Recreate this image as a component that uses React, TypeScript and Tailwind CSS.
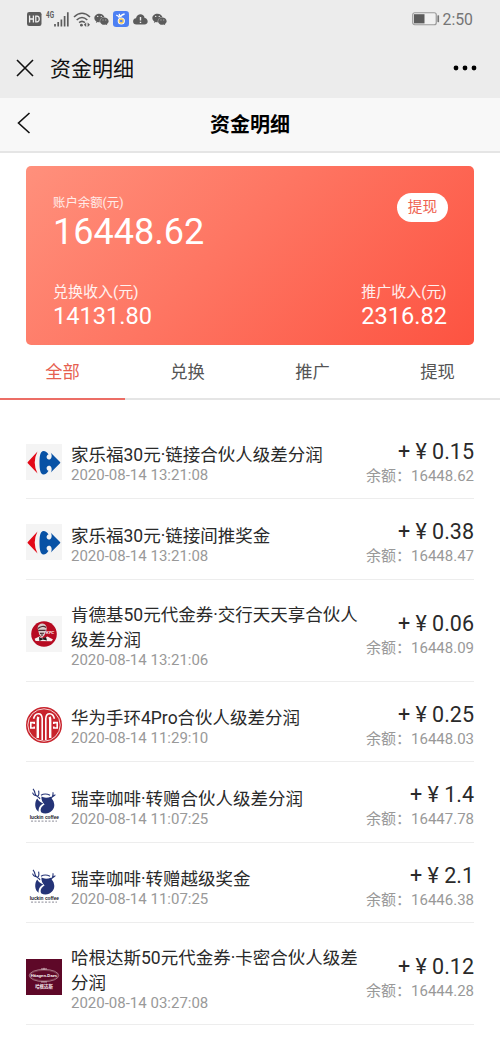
import React from 'react';
import { FaWeixin } from 'react-icons/fa';

type Logo = 'carrefour' | 'kfc' | 'citic' | 'luckin' | 'haagen';

interface Entry {
  logo: Logo;
  title: string[];
  time: string;
  amount: string;
  balance: string;
}

const entries: Entry[] = [
  { logo: 'carrefour', title: ['家乐福30元·链接合伙人级差分润'], time: '2020-08-14 13:21:08', amount: '0.15', balance: '16448.62' },
  { logo: 'carrefour', title: ['家乐福30元·链接间推奖金'], time: '2020-08-14 13:21:08', amount: '0.38', balance: '16448.47' },
  { logo: 'kfc', title: ['肯德基50元代金券·交行天天享合伙人', '级差分润'], time: '2020-08-14 13:21:06', amount: '0.06', balance: '16448.09' },
  { logo: 'citic', title: ['华为手环4Pro合伙人级差分润'], time: '2020-08-14 11:29:10', amount: '0.25', balance: '16448.03' },
  { logo: 'luckin', title: ['瑞幸咖啡·转赠合伙人级差分润'], time: '2020-08-14 11:07:25', amount: '1.4', balance: '16447.78' },
  { logo: 'luckin', title: ['瑞幸咖啡·转赠越级奖金'], time: '2020-08-14 11:07:25', amount: '2.1', balance: '16446.38' },
  { logo: 'haagen', title: ['哈根达斯50元代金券·卡密合伙人级差', '分润'], time: '2020-08-14 03:27:08', amount: '0.12', balance: '16444.28' },
];

function BrandLogo({ name }: { name: Logo }) {
  const cls = 'block h-9 w-9 shrink-0 overflow-visible';
  if (name === 'carrefour')
    return (
      <svg className={cls} viewBox="0 0 36 36">
        <rect width="36" height="36" fill="#f4f4f4" />
        <path d="M11.5 7.5 L1.8 18 Q1.2 18.7 1.8 19.3 L11.5 29.5 Q8.7 24 8.7 18.5 Q8.7 13 11.5 7.5Z" fill="#e30a18" />
        <path d="M22.5 10.5 C21.3 8.2 19.5 7 17.5 7 C14.3 7 13.5 12 13.5 18.5 C13.5 25 14.3 30.6 17.5 30.6 C19.5 30.6 21.3 29 22.5 26.8 C21.3 26.6 20.6 25.4 20.6 24.1 C20.6 22.2 22.2 21.2 23.8 21.8 C26 22.8 26.2 26.3 24.8 28.6 L34 19.3 Q34.7 18.6 34 17.9 L24.8 8.7 C26.2 11 26 14.4 23.8 15.4 C22.2 16 20.6 15 20.6 13.1 C20.6 11.8 21.3 10.7 22.5 10.5Z" fill="#0852a5" />
      </svg>
    );
  if (name === 'kfc')
    return (
      <svg className={cls} viewBox="0 0 36 36">
        <rect width="36" height="36" fill="#f5f5f5" />
        <circle cx="18" cy="18" r="12.8" fill="#b70b22" />
        <path d="M8.6 22.8 L13.8 20.2 L17 22.5 L21.5 20.6 L27 23.4 L25.5 25.2 L9.6 24.9Z" fill="#f7eeee" />
        <path d="M11.6 12 C11.8 6.8 18.8 5.7 20.4 10.5 C21.4 13.5 19.5 16.5 18.6 19 L16.2 21.8 L13.2 18.6Z" fill="#d9cccc" />
        <path d="M12 12.5 C14 10.5 18 9.5 20 11.5 M12.2 14.4 H19.6 M14 17.4 L18 17.2 M16 17.8 V20" stroke="#4c2c31" strokeWidth="1.1" fill="none" />
        <path d="M13 21 L16.4 22.4 L20 21 L21 24.6 L16.8 23.5 L13.4 25Z" fill="#20181b" />
        <text x="20" y="18.2" fontSize="4" fontWeight="700" fontStyle="italic" fill="#fff" fontFamily="Liberation Sans, sans-serif">KFC</text>
      </svg>
    );
  if (name === 'citic')
    return (
      <svg className={cls} viewBox="0 0 36 36">
        <circle cx="18" cy="18" r="18" fill="#c8232c" />
        <circle cx="18" cy="18" r="16.2" fill="none" stroke="#fff" strokeWidth=".8" />
        <g fill="none" stroke="#fff" strokeWidth="1.6">
          <path d="M8.2 17 V15.6 H4.8 V21 H8.2 V19.6" />
          <path d="M27.8 17 V15.6 H31.2 V21 H27.8 V19.6" />
          <path d="M7.6 11.8 C9 5.6 15.6 4.8 16.2 11.5 V33" />
          <path d="M28.4 11.8 C27 5.6 20.4 4.8 19.8 11.5 V33" />
        </g>
        <path d="M11.8 31 V13.5 C11.8 10.8 12.4 9.8 12.4 9.8" fill="none" stroke="#fff" strokeWidth="2.4" />
        <path d="M24.2 31 V13.5 C24.2 10.8 23.6 9.8 23.6 9.8" fill="none" stroke="#fff" strokeWidth="2.4" />
      </svg>
    );
  if (name === 'luckin')
    return (
      <svg className={cls} viewBox="0 0 36 36">
        <path d="M11.2 11.6 C8.2 15.5 8.6 22.3 12.6 24.8 C12.4 20.4 14.4 17.8 17.4 16.6 C15 15.8 13 14.5 11.2 11.6Z" fill="#253477" />
        <path d="M15.4 9.6 C18 11 21.5 11 24.8 9.8 C25.3 12 28 13.4 28 16.2 C29.2 20 26.8 24 23 25.8 C20.6 26.8 17.4 26.6 15.4 25.6 C13.6 22.6 15.2 19.6 18.6 17.6 C16.4 15.6 15.2 12.8 15.4 9.6Z" fill="#253477" />
        <path d="M14 12 C12.8 9 9.9 9.8 9.2 6.8 C8.9 5 8.3 3.2 7 1.8 M9.6 8.6 C8 8.2 7 7.2 6.5 5.6 M11.5 9.4 C13.5 8.2 13 5.6 12.6 3.6 M24 11.7 C26.6 10.6 27.4 8.6 27 5.2 M27 9.5 L29.4 7.6 M15 8.2 C17.5 6.8 21 6.8 24 8.2" fill="none" stroke="#253477" strokeWidth="1.1" />
        <text x="3.7" y="31.6" fontSize="4.8" fontWeight="700" fill="#20202a" fontFamily="Liberation Sans, sans-serif">luckin coffee</text>
        <path d="M5 34.1 H31" stroke="#8b8b98" strokeWidth="1" strokeDasharray="2 1.5" />
      </svg>
    );
  return (
    <svg className={cls} viewBox="0 0 36 36">
      <rect width="36" height="36" fill="#5e0828" />
      <ellipse cx="18" cy="16.5" rx="14.7" ry="6.1" fill="none" stroke="#dac1c6" strokeWidth=".6" />
      <ellipse cx="18" cy="16.5" rx="13.6" ry="5.1" fill="none" stroke="#a87884" strokeWidth=".4" />
      <path d="M15 9.9 H21 M18 8.8 V11 M15 23 H21" stroke="#d8bfc5" strokeWidth=".8" />
      <text x="18" y="18" textAnchor="middle" fontSize="4.2" fontWeight="700" fill="#fff" fontFamily="Liberation Sans, sans-serif">Häagen-Dazs</text>
      <text x="18" y="29" textAnchor="middle" fontSize="4.4" fontWeight="700" fill="#f5e8ec" fontFamily="Noto Sans CJK SC, sans-serif">哈根达斯</text>
    </svg>
  );
}

function StatusBar() {
  return (
    <div className="flex h-[38px] items-center bg-[#ececec] pr-[27px] pl-[27px] text-[#5c5c5c]">
      <svg className="h-[14px] w-[15px]" viewBox="0 0 15 14">
        <rect width="14.5" height="14" rx="2.2" fill="#5c5c5c" />
        <path d="M2.6 3.5 V10.5 M6.4 3.5 V10.5 M2.6 7 H6.4 M8.8 4.1 H10 C13 4.1 13 9.9 10 9.9 H8.8 Z" fill="none" stroke="#efefef" strokeWidth="1.3" />
      </svg>
      <svg className="ml-1 h-[17px] w-6 overflow-visible" viewBox="0 0 24 17">
        <text x="0" y="7.2" fontSize="8.5" fontWeight="700" fill="#5c5c5c" fontFamily="Roboto, sans-serif" textLength="8" lengthAdjust="spacingAndGlyphs">4G</text>
        <path d="M9 13 V15.5 M12.2 11 V15.5 M15.4 8.5 V15.5 M18.6 5 V15.5 M21.8 1.2 V15.5" stroke="#5c5c5c" strokeWidth="1.7" />
      </svg>
      <svg className="ml-[3px] h-[15px] w-[18px]" viewBox="0 0 18 15">
        <path d="M1 5 Q9 -2.5 17 5 M3.7 8 Q9 3 14.3 8 M6.1 10.6 Q9 8 11.9 10.6" fill="none" stroke="#5c5c5c" strokeWidth="1.6" />
        <circle cx="8.4" cy="13.2" r="1.4" fill="#5c5c5c" />
        <path d="M13.2 10.5 V15 L10.8 12.8Z M14.6 10.5 V15 L17 12.8Z" fill="#5c5c5c" />
      </svg>
      <FaWeixin className="ml-[3px] h-[15px] w-[15px]" />
      <svg className="ml-[4px] h-4 w-4" viewBox="0 0 16 16">
        <rect width="16" height="16" rx="3.2" fill="#4d80f3" />
        <circle cx="8.3" cy="10" r="2.7" fill="none" stroke="#fff" strokeWidth="1.8" />
        <circle cx="8.3" cy="10" r="2" fill="none" stroke="#f5c957" strokeWidth="1.3" />
        <path d="M3.2 4.4 Q5.3 4.1 6.4 6.8 M6.2 2.8 L7 5.7 M11.6 3 Q8.1 3.6 7.4 6.1" fill="none" stroke="#fff" strokeWidth="1.3" />
      </svg>
      <svg className="ml-1 h-[11px] w-[15px]" viewBox="0 0 15 11">
        <path d="M3.5 10.5 C-1 10.5 -.9 4.6 3 4.3 C4 -.9 11 -.9 11.6 4.1 C15.6 4.4 15.8 10.5 11.5 10.5Z" fill="#5c5c5c" />
        <path d="M7.5 3 V6.5 M7.5 7.7 V9.1" stroke="#eee" strokeWidth="1.4" />
      </svg>
      <FaWeixin className="ml-[4px] h-[15px] w-[15px]" />
      <svg className="ml-auto h-[14px] w-[28px]" viewBox="0 0 28 14">
        <rect x=".75" y=".75" width="23.5" height="12" rx="2" fill="#f1f1f1" stroke="#999" strokeWidth="1.2" />
        <rect x="2" y="2.2" width="10.5" height="9.2" fill="#5c5c5c" />
        <rect x="25.4" y="3.2" width="1.7" height="7" rx=".6" fill="#777" />
      </svg>
      <span className="ml-[3px] pt-[2px] text-[15.8px] leading-none text-[#757575]">2:50</span>
    </div>
  );
}

export default function App() {
  return (
    <main className="h-[1039px] w-[500px] overflow-hidden bg-white font-['Roboto','Noto_Sans_CJK_SC',sans-serif] text-[#2a2a2a]">
      <StatusBar />
      <header className="flex h-[60px] items-center bg-[#ececec] pr-[23px] pl-4">
        <svg className="h-[18px] w-[18px]" viewBox="0 0 18 18">
          <path d="M1 1 L17 17 M17 1 L1 17" stroke="#111" strokeWidth="1.6" />
        </svg>
        <span className="ml-4 pt-[2px] text-[21px] leading-[30px] text-[#111]">资金明细</span>
        <svg className="ml-auto h-[6px] w-[24px]" viewBox="0 0 24 6">
          <circle cx="3" cy="3" r="2.4" /><circle cx="12" cy="3" r="2.4" /><circle cx="21" cy="3" r="2.4" />
        </svg>
      </header>
      <div className="grid h-[55px] grid-cols-[100px_1fr_100px] items-center border-b-2 border-[#e5e5e5] bg-[#f8f8f8]">
        <svg className="ml-[17px] -mt-[4px] h-[22px] w-[14px]" viewBox="0 0 14 22">
          <path d="M12.5 1 L1.5 11 L12.5 21" fill="none" stroke="#111" strokeWidth="1.6" />
        </svg>
        <h1 className="pt-px text-center text-[20px] leading-[28px] font-bold text-black">资金明细</h1>
      </div>

      <section className="mx-[26px] mt-[13px] flex h-[178.5px] flex-col justify-between rounded-[5px] bg-[linear-gradient(135deg,#ff907c_0%,#fe7562_45%,#fd5341_100%)] px-[27px] pt-[28px] pb-[15px] text-white">
        <div className="flex items-start justify-between">
          <div>
            <p className="text-[12.4px] leading-[18px] text-white/85">账户余额(元)</p>
            <p className="text-[36px] leading-[41px]">16448.62</p>
          </div>
          <button className="-mt-px -mr-px h-[29px] w-[51px] rounded-full bg-white text-[14.7px] leading-[29px] text-[#ee614f]">提现</button>
        </div>
        <div className="flex justify-between">
          <div>
            <p className="text-[15px] leading-[22px] text-white/90">兑换收入(元)</p>
            <p className="text-[23.6px] leading-[27px]">14131.80</p>
          </div>
          <div>
            <p className="text-[15px] leading-[22px] text-white/90">推广收入(元)</p>
            <p className="text-[23.6px] leading-[27px]">2316.82</p>
          </div>
        </div>
      </section>

      <nav className="grid h-[55px] grid-cols-4 text-center text-[17.3px] leading-[54px] text-[#555]">
        <span className="h-[55px] border-b-2 border-[#ec6d65] text-[#e65f50]">全部</span>
        <span className="h-[55px] border-b-2 border-[#e5e5e5]">兑换</span>
        <span className="h-[55px] border-b-2 border-[#e5e5e5]">推广</span>
        <span className="h-[55px] border-b-2 border-[#e5e5e5]">提现</span>
      </nav>

      <ul className="mx-[26px] mt-[19px]">
        {entries.map((e, i) => (
          <li key={i} className={`flex items-center border-b-[1.5px] border-[#ededed] pt-[7px] ${e.title.length > 1 ? 'h-[102px]' : 'h-[80.5px]'}`}>
            <BrandLogo name={e.logo} />
            <div className="ml-[9px] flex-1 pt-[3px] whitespace-nowrap">
              {e.title.map((line) => (
                <p key={line} className="text-[17.5px] leading-[25px]">{line}</p>
              ))}
              <p className="text-[15px] leading-[15px] text-[#999]">{e.time}</p>
            </div>
            <div className="pt-[2px] text-right whitespace-nowrap">
              <p className="text-[21.5px] leading-[26px]">+ ¥ {e.amount}</p>
              <p className="text-[15px] leading-[22px] text-[#999]">余额：{e.balance}</p>
            </div>
          </li>
        ))}
      </ul>
    </main>
  );
}
